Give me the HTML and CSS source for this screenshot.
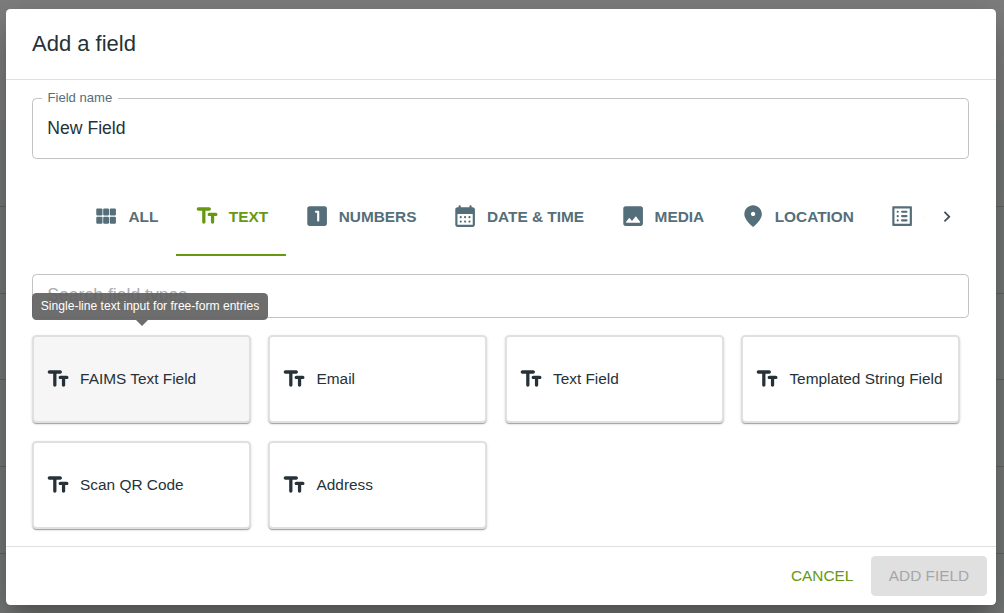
FILE: index.html
```html
<!DOCTYPE html>
<html lang="en">
<head>
<meta charset="utf-8">
<title>Add a field</title>
<link rel="stylesheet" href="styles.css">
</head>
<body>
<svg class="sprite" aria-hidden="true">
  <symbol id="text" viewBox="0 0 24 24"><path d="M2.5 5.5C2.5 6.33 3.17 7 4 7h3.5v10.5c0 .83.67 1.5 1.5 1.5s1.5-.67 1.5-1.5V7H14c.83 0 1.5-.67 1.5-1.5S14.83 4 14 4H4c-.83 0-1.5.67-1.5 1.5zM20 9h-6c-.83 0-1.5.67-1.5 1.5S13.17 12 14 12h1.5v5.5c0 .83.67 1.5 1.5 1.5s1.5-.67 1.5-1.5V12H20c.83 0 1.5-.67 1.5-1.5S20.83 9 20 9z"/></symbol>
</svg>
<div class="page"><div class="row"></div><div class="row"></div><div class="row"></div><div class="row"></div><div class="row"></div></div>
<main class="dialog">
  <h1 class="title">Add a field</h1>
  <section class="content">
    <div class="input name"><label class="label">Field name</label>New Field</div>
    <nav class="tabs">
      <div class="scroller">
        <div class="tab"><svg class="icon" viewBox="0 0 24 24"><rect x="3" y="5" width="5.67" height="6.5" rx="1"/><rect x="9.33" y="5" width="5.33" height="6.5" rx="1"/><rect x="15.33" y="5" width="5.67" height="6.5" rx="1"/><rect x="3" y="12.5" width="5.67" height="6.5" rx="1"/><rect x="9.33" y="12.5" width="5.33" height="6.5" rx="1"/><rect x="15.33" y="12.5" width="5.67" height="6.5" rx="1"/></svg>ALL</div>
        <div class="tab selected"><svg class="icon"><use href="#text"/></svg>TEXT</div>
        <div class="tab"><svg class="icon" viewBox="0 0 24 24"><path d="M19 3H5c-1.1 0-2 .9-2 2v14c0 1.1.9 2 2 2h14c1.1 0 2-.9 2-2V5c0-1.1-.9-2-2-2zm-6 14c-.55 0-1-.45-1-1V9h-1c-.55 0-1-.45-1-1s.45-1 1-1h2c.55 0 1 .45 1 1v8c0 .55-.45 1-1 1z"/></svg>NUMBERS</div>
        <div class="tab"><svg class="icon" viewBox="0 0 24 24"><path fill-rule="evenodd" d="M17 2c-.55 0-1 .45-1 1v1H8V3c0-.55-.45-1-1-1s-1 .45-1 1v1H5c-1.11 0-2 .9-2 2v14c0 1.1.89 2 2 2h14c1.1 0 2-.9 2-2V6c0-1.1-.9-2-2-2h-1V3c0-.55-.45-1-1-1zm2 18H5V10h14v10z"/><circle cx="8" cy="13" r="1"/><circle cx="12" cy="13" r="1"/><circle cx="16" cy="13" r="1"/><circle cx="8" cy="17" r="1"/><circle cx="12" cy="17" r="1"/><circle cx="16" cy="17" r="1"/></svg>DATE &amp; TIME</div>
        <div class="tab"><svg class="icon" viewBox="0 0 24 24"><path d="M21 19V5c0-1.1-.9-2-2-2H5c-1.1 0-2 .9-2 2v14c0 1.1.9 2 2 2h14c1.1 0 2-.9 2-2zM8.9 13.98l2.1 2.53 3.1-3.99c.2-.26.6-.26.8.01l3.51 4.68c.25.33.01.8-.4.8H6.02c-.42 0-.65-.48-.39-.81L8.12 14c.19-.26.57-.27.78-.02z"/></svg>MEDIA</div>
        <div class="tab"><svg class="icon" viewBox="0 0 24 24"><path d="M12 2c-4.2 0-8 3.22-8 8.2 0 3.32 2.67 7.25 8 11.8 5.33-4.55 8-8.48 8-11.8C20 5.22 16.2 2 12 2zm0 10c-1.1 0-2-.9-2-2s.9-2 2-2 2 .9 2 2-.9 2-2 2z"/></svg>LOCATION</div>
        <div class="tab"><svg class="icon" viewBox="0 0 24 24"><path fill-rule="evenodd" d="M20.1 3H3.9c-.5 0-.9.4-.9.9v16.2c0 .4.4.9.9.9h16.2c.4 0 .9-.5.9-.9V3.9c0-.5-.5-.9-.9-.9zM19 19H5V5h14v14z"/><rect x="7" y="7" width="2" height="2" rx=".9"/><rect x="7" y="11" width="2" height="2" rx=".9"/><rect x="7" y="15" width="2" height="2" rx=".9"/><rect x="11" y="7" width="6" height="2" rx="1"/><rect x="11" y="11" width="6" height="2" rx="1"/><rect x="11" y="15" width="6" height="2" rx="1"/></svg>CHOICE</div>
      </div>
      <div class="next"><svg class="chevron" viewBox="0 0 24 24"><path d="M8.59 16.34l4.58-4.59-4.58-4.59L10 5.75l6 6-6 6-1.41-1.41z"/></svg></div>
    </nav>
    <div class="input search">Search field types</div>
    <div class="grid">
      <div class="card hover"><svg class="icon"><use href="#text"/></svg><span class="caption">FAIMS Text Field</span><div class="tooltip">Single-line text input for free-form entries</div></div>
      <div class="card"><svg class="icon"><use href="#text"/></svg><span class="caption">Email</span></div>
      <div class="card"><svg class="icon"><use href="#text"/></svg><span class="caption">Text Field</span></div>
      <div class="card"><svg class="icon"><use href="#text"/></svg><span class="caption">Templated String Field</span></div>
      <div class="card"><svg class="icon"><use href="#text"/></svg><span class="caption">Scan QR Code</span></div>
      <div class="card"><svg class="icon"><use href="#text"/></svg><span class="caption">Address</span></div>
    </div>
  </section>
  <footer class="actions">
    <button class="button">CANCEL</button>
    <button class="button disabled" disabled>ADD FIELD</button>
  </footer>
</main>
</body>
</html>
```
FILE: styles.css
```css
* { box-sizing: border-box; }
body {
  margin: 0;
  width: 1004px;
  height: 613px;
  overflow: hidden;
  padding: 9px 8px 8px 6px;
  background: #7f7f7f;
  color: #263238;
  font-family: "Liberation Sans", Arial, sans-serif;
}
.sprite { position: absolute; width: 0; height: 0; }
/* Dimmed page behind the dialog */
.page {
  position: absolute;
  inset: 120px 0 0;
  background: #777b79;
  overflow: hidden;
}
.row { height: 86.8px; border-bottom: 1px solid #646766; }
.dialog {
  position: relative;
  display: flex;
  flex-direction: column;
  height: 596px;
  background: #fff;
  border-radius: 4.4px;
  box-shadow: 0 12px 16.4px -7.6px rgba(0,0,0,.2), 0 26.2px 41.5px 3.3px rgba(0,0,0,.14), 0 9.8px 50.2px 8.7px rgba(0,0,0,.12);
}
.title {
  margin: 0;
  height: 70px;
  flex: none;
  padding: 0 26px;
  font-size: 22px;
  font-weight: 400;
  line-height: 69px;
}
.content {
  flex: none;
  height: 468px;
  padding: 19px 27px 0 26px;
  border-top: 1px solid #e0e0e0;
  border-bottom: 1px solid #e0e0e0;
}
.input {
  position: relative;
  display: flex;
  align-items: center;
  padding: 0 14.3px;
  border: 1px solid #c2c2c2;
  border-radius: 4.4px;
  font-size: 17.6px;
}
.name { height: 61px; margin-top: -1px; }
.label {
  position: absolute;
  left: 9px;
  top: -9px;
  padding: 0 5.5px;
  background: #fff;
  color: #546e7a;
  font-size: 13.1px;
  line-height: 16px;
}
.tabs { display: flex; height: 79px; margin: 18px 0; color: #546e7a; }
.scroller { display: flex; width: 849.9px; margin-left: 43.6px; overflow: hidden; flex: none; }
.tab {
  display: flex;
  flex: none;
  align-items: center;
  gap: 8.9px;
  padding: 0 17.6px 0 17.8px;
  font-size: 15.4px;
  font-weight: 700;
}
.selected { color: #669911; box-shadow: inset 0 -2px #669911; }
.icon { width: 26.2px; height: 26.2px; flex: none; fill: currentColor; }
.next { display: flex; width: 43.3px; align-items: center; justify-content: center; flex: none; color: #455055; }
.chevron { width: 21.8px; height: 21.8px; fill: currentColor; }
.search { height: 44px; padding-bottom: 2px; color: #a9adaf; }
.grid {
  display: grid;
  grid-template-columns: repeat(4, 219px);
  grid-auto-rows: 88px;
  gap: 18px 17.45px;
  margin-top: 17px;
}
.card {
  position: relative;
  display: flex;
  align-items: center;
  gap: 8.9px;
  padding-left: 11px;
  border: 2px solid #e0e0e0;
  border-radius: 4.4px;
  background: #fff;
  box-shadow: 0 2px 1px -1px rgba(0,0,0,.2), 0 1px 1px rgba(0,0,0,.14), 0 1px 3px rgba(0,0,0,.12);
  font-size: 15.4px;
}
.hover { background: #f6f6f6; }
.tooltip {
  position: absolute;
  left: -2px;
  top: -44px;
  width: 236px;
  height: 27px;
  border-radius: 4.4px;
  background: rgba(97,97,97,.92);
  color: #fff;
  font-size: 12.1px;
  line-height: 26px;
  text-align: center;
  white-space: nowrap;
}
.tooltip::after {
  content: "";
  position: absolute;
  left: 103.5px;
  top: 27px;
  border: 6px solid transparent;
  border-top-color: rgba(97,97,97,.92);
  border-bottom: 0;
}
.actions { display: flex; flex: 1; align-items: center; justify-content: flex-end; padding-right: 9px; gap: 9px; }
.button {
  height: 40px;
  padding: 0 8.6px;
  border: 0;
  border-radius: 4.4px;
  background: none;
  color: #669911;
  font: 15.4px "Liberation Sans", Arial, sans-serif;
}
.disabled { width: 116px; background: #e0e0e0; color: #a6a6a6; }
```
